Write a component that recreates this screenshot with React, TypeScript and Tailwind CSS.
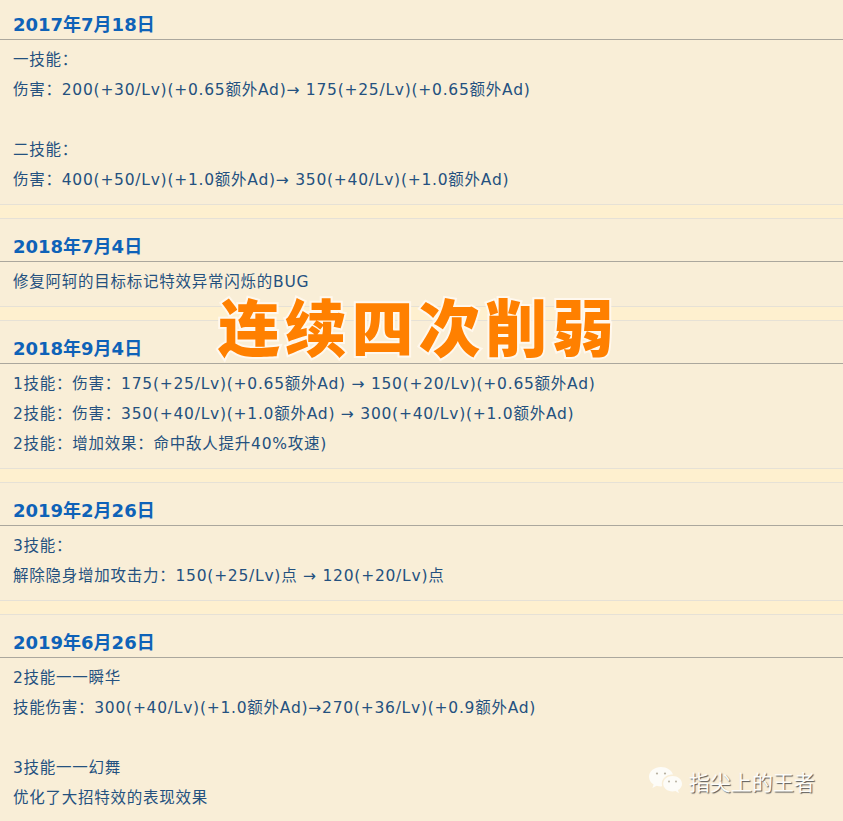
const sections = [
  {
    date: '2017年7月18日',
    lines: [
      '一技能\uFF1A',
      '伤害\uFF1A200(+30/Lv)(+0.65额外Ad)→ 175(+25/Lv)(+0.65额外Ad)',
      '',
      '二技能\uFF1A',
      '伤害\uFF1A400(+50/Lv)(+1.0额外Ad)→ 350(+40/Lv)(+1.0额外Ad)',
    ],
  },
  { date: '2018年7月4日', lines: ['修复阿轲的目标标记特效异常闪烁的BUG'] },
  {
    date: '2018年9月4日',
    lines: [
      '1技能\uFF1A伤害\uFF1A175(+25/Lv)(+0.65额外Ad) → 150(+20/Lv)(+0.65额外Ad)',
      '2技能\uFF1A伤害\uFF1A350(+40/Lv)(+1.0额外Ad) → 300(+40/Lv)(+1.0额外Ad)',
      '2技能\uFF1A增加效果\uFF1A命中敌人提升40%攻速)',
    ],
  },
  {
    date: '2019年2月26日',
    lines: ['3技能\uFF1A', '解除隐身增加攻击力\uFF1A150(+25/Lv)点 → 120(+20/Lv)点'],
  },
  {
    date: '2019年6月26日',
    lines: [
      '2技能一一瞬华',
      '技能伤害\uFF1A300(+40/Lv)(+1.0额外Ad)→270(+36/Lv)(+0.9额外Ad)',
      '',
      '3技能一一幻舞',
      '优化了大招特效的表现效果',
    ],
  },
];

function WechatIcon() {
  return (
    <svg width="36" height="30" viewBox="0 0 36 30" fill="#fdfcf8">
      <path d="M13 1C6.5 1 1 5.3 1 10.8c0 3.2 1.8 5.9 4.6 7.7L4.4 22l4.3-2.2c1.4.4 2.8.6 4.3.6.4 0 .8 0 1.200-.1-.3-.9-.4-1.800-.4-2.700 0-5 4.600-9 10.200-9h1C23.700 4.200 18.800 1 13 1z" />
      <path d="M24.500 10c-5 0-9.300 3.400-9.300 7.700s4.300 7.700 9.300 7.700c1 0 2-.1 3-.4l3.400 2.300-.9-3.200c2.500-1.500 4-3.800 4-6.400 0-4.300-4.300-7.700-9.500-7.700z" />
      <circle cx="9" cy="7.500" r="1.100" fill="#b9b2a2" />
      <circle cx="17" cy="7.500" r="1.100" fill="#b9b2a2" />
      <circle cx="21" cy="15.500" r="1" fill="#b9b2a2" />
      <circle cx="28" cy="15.500" r="1" fill="#b9b2a2" />
    </svg>
  );
}

export default function App() {
  return (
    <div className="relative h-[821px] w-[843px] overflow-hidden bg-[#fef0cf] font-['DejaVu_Sans','Noto_Sans_CJK_SC',sans-serif] text-[15.500px] tracking-[0.750px] text-[#24517f]">
      <div className="-mt-[4px] flex flex-col gap-[13px]">
        {sections.map((s) => (
          <section key={s.date} className="border-y border-[#e6e1d6] bg-[#f9eed7] pb-[9px]">
            <h2 className="flex h-[43px] items-center border-b border-[#aba79d] pl-[13px] pt-[14px] text-[18px] font-bold leading-none tracking-normal text-[#0e62b8]">
              {s.date}
            </h2>
            <div className="pl-[13px] pt-[5px]">
              {s.lines.map((line, i) => (
                <p key={i} className="h-[30px] leading-[30px] whitespace-pre">
                  {line}
                </p>
              ))}
            </div>
          </section>
        ))}
      </div>

      <div className="absolute left-[218px] top-[283px] whitespace-nowrap font-['Noto_Sans_CJK_SC',sans-serif] text-[62px] font-black leading-[84px] tracking-[4.800px] text-[#ff8000] [-webkit-text-stroke:4px_#fff8ee] [paint-order:stroke_fill]">
        连续四次削弱
      </div>

      <div className="absolute left-[648px] top-[766px] flex items-center gap-[5px]">
        <WechatIcon />
        <span className="font-['Noto_Sans_CJK_SC',sans-serif] text-[21px] leading-none tracking-normal text-[#fdfcf8] [text-shadow:1px_1px_1px_#555]">
          指尖上的王者
        </span>
      </div>
    </div>
  );
}
